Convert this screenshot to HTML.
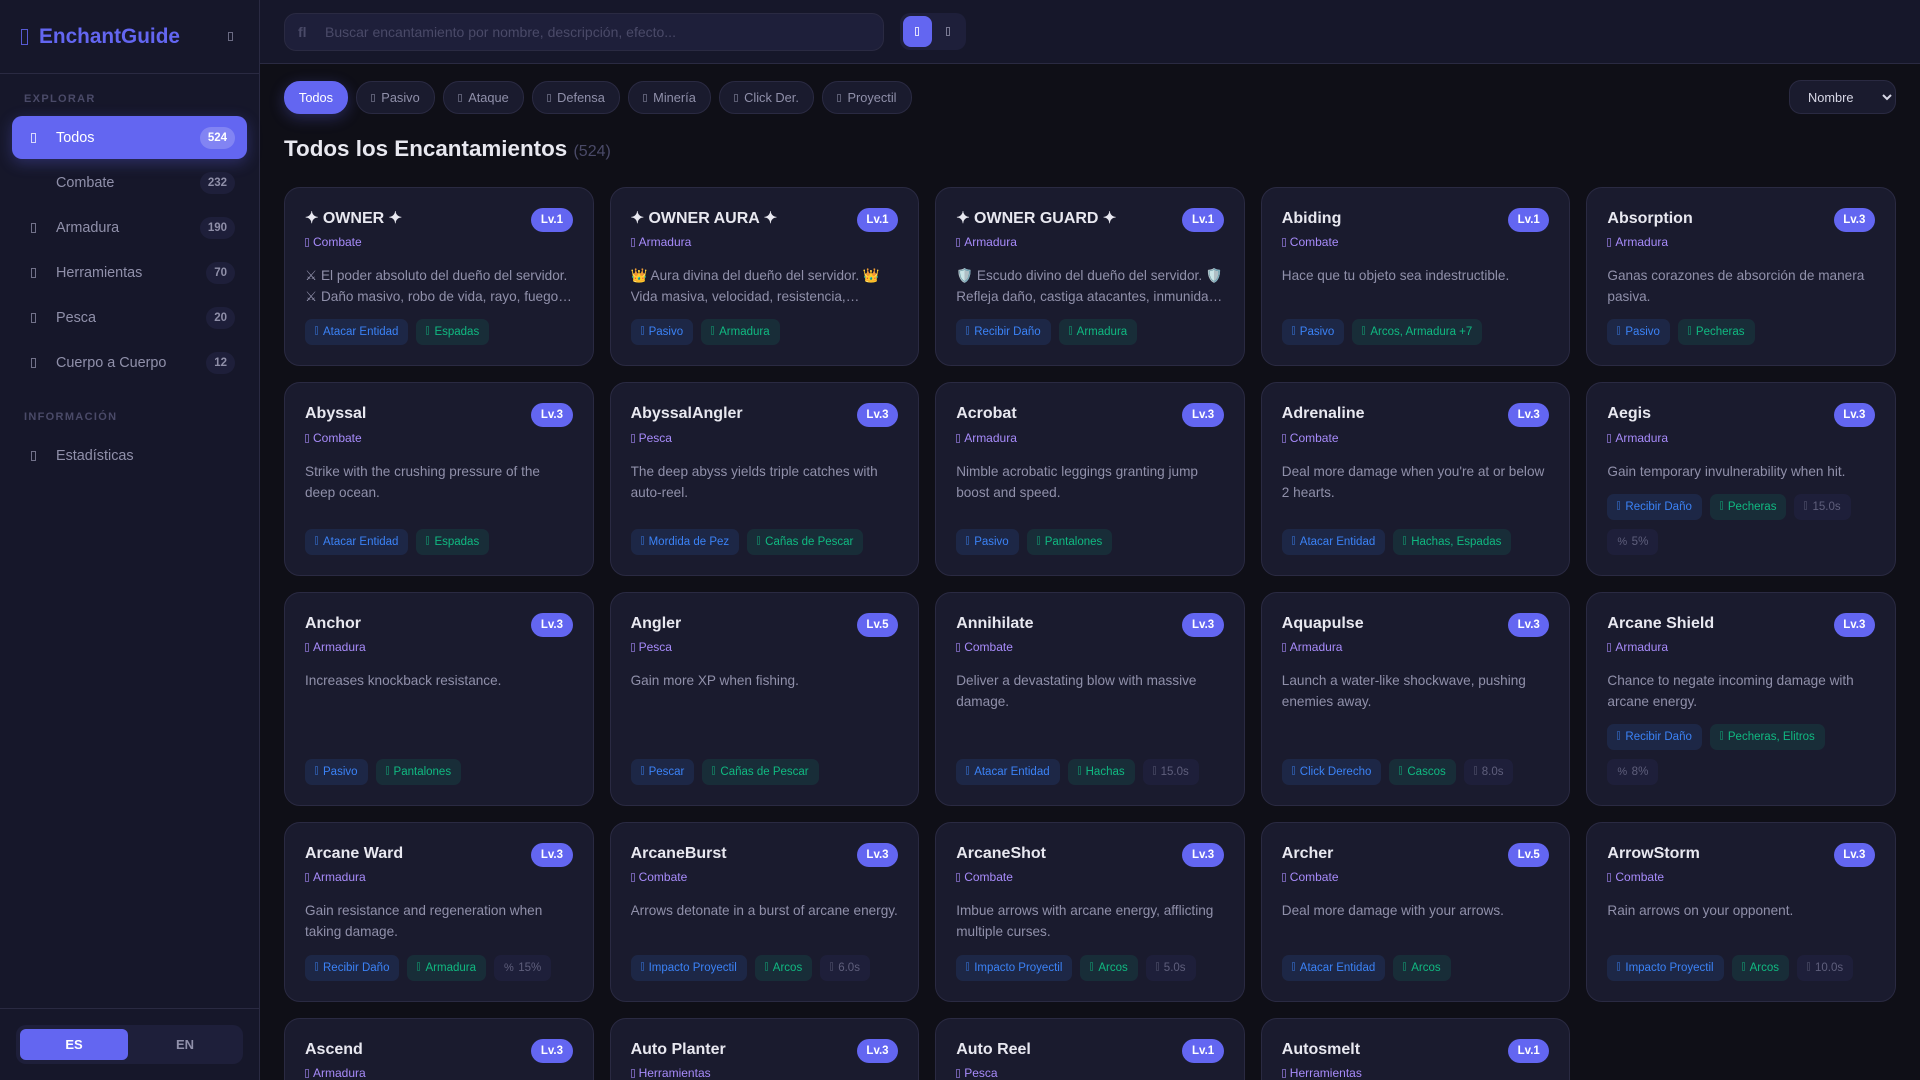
<!DOCTYPE html>
<html lang="es"><head><meta charset="utf-8"><title>EnchantGuide</title>
<style>
*{box-sizing:border-box;margin:0;padding:0}
html,body{width:1920px;height:1080px;overflow:hidden;background:#0f0f17;font-family:"Liberation Sans",sans-serif;color:#e8e8f0}
#r{position:absolute;left:0;top:0;width:1920px;height:1080px;overflow:hidden;background:#0f0f17}
i{font-style:normal}
.side{position:absolute;left:0;top:0;width:260px;height:1080px;background:#16172a;border-right:1px solid #2a2a42}
.hd{height:74px;border-bottom:1px solid #2a2a42;position:relative}
.logo{position:absolute;left:39px;top:21px;font-size:20.8px;font-weight:700;color:#6366f1;line-height:31px;white-space:nowrap}
.li{position:absolute;left:21px;top:29px;width:7px;height:16px;border:1px solid #6366f1;opacity:.85}
.tg{position:absolute;left:228px;top:32px;width:5px;height:9px;border:1px solid #8f8fa8;opacity:.7}
.lab{position:absolute;left:24px;font-size:11px;font-weight:700;letter-spacing:1.32px;color:#4a4a68;line-height:13px}
.n{position:absolute;left:12px;width:235px;height:43px;border-radius:10px;color:#9090aa;font-size:14.4px;line-height:43px;padding:1px 0 0 44px}
.n i{position:absolute;left:19px;top:17px;width:5px;height:10px;border:1px solid currentColor;opacity:.75}
.n b{position:absolute;right:12px;top:11px;height:22px;line-height:22px;padding:0 8px;border-radius:11px;background:#1e1f3a;font-size:11.5px;color:#8f8fa8}
.n.a{background:#6366f1;color:#fff;box-shadow:0 4px 15px rgba(99,102,241,.3)}
.n.a b{background:rgba(255,255,255,.2);color:#fff}
.foot{position:absolute;left:0;right:0;top:1008px;height:72px;border-top:1px solid #2a2a42}
.lang{position:absolute;left:16px;top:16px;width:227px;height:39px;background:#1e1f3a;border-radius:10px}
.lang span{position:absolute;top:4px;height:31px;line-height:31px;text-align:center;font-size:13px;font-weight:700;border-radius:6px;width:108px;color:#9090aa}
.top{position:absolute;left:260px;top:0;width:1660px;height:64px;background:#16172a;border-bottom:1px solid #2a2a42}
.srch{position:absolute;left:24px;top:13px;width:600px;height:38px;background:#1e1f3a;border:1px solid #2a2a42;border-radius:12px;line-height:36px;font-size:14px;color:#4a4a68;padding-left:40px}
.srch i{position:absolute;left:13px;top:0;font-weight:700;font-size:14px}
.vw{position:absolute;left:640px;top:13px;width:66px;height:37px;background:#1e1f3a;border-radius:10px}
.vw span{position:absolute;top:3px;width:29px;height:31px;border-radius:8px}
.vw i{position:absolute;left:12px;top:11px;width:4px;height:9px;border:1px solid #9090aa;opacity:.8}
.fl{position:absolute;top:81px;height:33px;line-height:31px;border-radius:16px;background:#1a1b2e;border:1px solid #2a2a42;color:#9090aa;font-size:12.8px;text-align:center;white-space:nowrap}
.fl i{display:inline-block;width:4px;height:8px;border:1px solid currentColor;opacity:.55;margin-right:6px;vertical-align:0}
.fl.a{background:#6366f1;border-color:#6366f1;color:#fff;box-shadow:0 4px 15px rgba(99,102,241,.3)}
select{position:absolute;left:1789px;top:80px;width:107px;height:34px;background:#1a1b2e;border:1px solid #2a2a42;border-radius:12px;color:#d8d8e6;font:12.8px "Liberation Sans",sans-serif;padding:0 14px}
h1{position:absolute;left:284px;top:135px;font-size:22.4px;font-weight:700;line-height:28px;white-space:nowrap}
h1 span{font-size:16px;font-weight:400;color:#4a4a68}
.grid{position:absolute;left:284px;top:187px;width:1612px;display:grid;grid-template-columns:repeat(5,1fr);grid-template-rows:179px 194px 214px 180px 120px;gap:16px}
.c{background:#1a1b2e;border:1px solid #2a2a42;border-radius:16px;padding:20px;display:flex;flex-direction:column;position:relative;min-width:0}
.t{font-size:16px;font-weight:700;line-height:20px;color:#e8e8f0;height:20px;margin-top:1px}
.lv{position:absolute;right:20px;top:20px;height:24px;line-height:24px;padding:0 9.6px;border-radius:12px;background:#6366f1;color:#fff;font-size:11.5px;font-weight:700}
.ct{font-size:12px;color:#a78bfa;line-height:14px;margin-top:6px;height:14px;white-space:nowrap}
.ct i{display:inline-block;width:4px;height:9px;border:1px solid currentColor;opacity:.6;margin-right:4px;vertical-align:-1px}
.d{font-size:13.6px;line-height:20.8px;color:#9090aa;margin-top:17px;margin-bottom:10px;display:-webkit-box;-webkit-line-clamp:2;-webkit-box-orient:vertical;overflow:hidden}
.c:nth-child(n+6):nth-child(-n+10) .ct{margin-top:7px}
.m{min-height:41.6px}
.tags{display:flex;flex-wrap:wrap;gap:8.6px 8px;margin-top:auto}
.g{height:26.4px;line-height:27px;border-radius:7px;padding:0 10px;font-size:11.5px;white-space:nowrap}
.g i{display:inline-block;width:3px;height:9px;border:1px solid currentColor;opacity:.45;margin-right:5px;vertical-align:0}
.g i.p{width:auto;height:auto;border:0;font-size:11px;margin-right:4.5px;opacity:1;vertical-align:0}
.x{background:rgba(59,130,246,.12);color:#3b82f6}
.y{background:rgba(16,185,129,.12);color:#10b981}
.z{background:#1e1f3a;color:#5f5f7c}
.cut{overflow:hidden}
</style></head><body><div id="r">
<div class="side">
<div class="hd"><span class="li"></span><div class="logo">EnchantGuide</div><span class="tg"></span></div>
<div class="lab" style="top:93px">EXPLORAR</div>
<div class="n a" style="top:116px"><i></i>Todos<b>524</b></div>
<div class="n" style="top:161px">Combate<b>232</b></div>
<div class="n" style="top:206px"><i></i>Armadura<b>190</b></div>
<div class="n" style="top:251px"><i></i>Herramientas<b>70</b></div>
<div class="n" style="top:296px"><i></i>Pesca<b>20</b></div>
<div class="n" style="top:341px"><i></i>Cuerpo a Cuerpo<b>12</b></div>
<div class="lab" style="top:411px">INFORMACIÓN</div>
<div class="n" style="top:434px"><i></i>Estadísticas</div>
<div class="foot"><div class="lang"><span style="left:4px;background:#6366f1;color:#fff">ES</span><span style="left:115px">EN</span></div></div>
</div>
<div class="top">
<div class="srch"><i>fl</i>Buscar encantamiento por nombre, descripción, efecto...</div>
<div class="vw"><span style="left:3px;background:#6366f1"><i style="border-color:#fff"></i></span><span style="left:34px"><i></i></span></div>
</div>
<div class="fl a" style="left:284px;width:64px">Todos</div>
<div class="fl" style="left:356px;width:79px"><i></i>Pasivo</div>
<div class="fl" style="left:443px;width:81px"><i></i>Ataque</div>
<div class="fl" style="left:532px;width:88px"><i></i>Defensa</div>
<div class="fl" style="left:628px;width:83px"><i></i>Minería</div>
<div class="fl" style="left:719px;width:95px"><i></i>Click Der.</div>
<div class="fl" style="left:822px;width:90px"><i></i>Proyectil</div>
<select><option>Nombre</option></select>
<h1>Todos los Encantamientos <span>(524)</span></h1>
<div class="grid">
<div class="c"><div class="t">✦ OWNER ✦</div><span class="lv">Lv.1</span><div class="ct"><i></i>Combate</div><div class="d m">⚔ El poder absoluto del dueño del servidor. ⚔ Daño masivo, robo de vida, rayo, fuego, explosiones y mucho más para ti.</div><div class="tags"><span class="g x"><i></i>Atacar Entidad</span><span class="g y"><i></i>Espadas</span></div></div>
<div class="c"><div class="t">✦ OWNER AURA ✦</div><span class="lv">Lv.1</span><div class="ct"><i></i>Armadura</div><div class="d m">👑 Aura divina del dueño del servidor. 👑 Vida masiva, velocidad, resistencia, regeneración y mucho más para ti.</div><div class="tags"><span class="g x"><i></i>Pasivo</span><span class="g y"><i></i>Armadura</span></div></div>
<div class="c"><div class="t">✦ OWNER GUARD ✦</div><span class="lv">Lv.1</span><div class="ct"><i></i>Armadura</div><div class="d m">🛡️ Escudo divino del dueño del servidor. 🛡️ Refleja daño, castiga atacantes, inmunidad total y mucho más para ti.</div><div class="tags"><span class="g x"><i></i>Recibir Daño</span><span class="g y"><i></i>Armadura</span></div></div>
<div class="c"><div class="t">Abiding</div><span class="lv">Lv.1</span><div class="ct"><i></i>Combate</div><div class="d m">Hace que tu objeto sea indestructible.</div><div class="tags"><span class="g x"><i></i>Pasivo</span><span class="g y"><i></i>Arcos, Armadura +7</span></div></div>
<div class="c"><div class="t">Absorption</div><span class="lv">Lv.3</span><div class="ct"><i></i>Armadura</div><div class="d m">Ganas corazones de absorción de manera pasiva.</div><div class="tags"><span class="g x"><i></i>Pasivo</span><span class="g y"><i></i>Pecheras</span></div></div>

<div class="c"><div class="t">Abyssal</div><span class="lv">Lv.3</span><div class="ct"><i></i>Combate</div><div class="d">Strike with the crushing pressure of the deep ocean.</div><div class="tags"><span class="g x"><i></i>Atacar Entidad</span><span class="g y"><i></i>Espadas</span></div></div>
<div class="c"><div class="t">AbyssalAngler</div><span class="lv">Lv.3</span><div class="ct"><i></i>Pesca</div><div class="d">The deep abyss yields triple catches with auto-reel.</div><div class="tags"><span class="g x"><i></i>Mordida de Pez</span><span class="g y"><i></i>Cañas de Pescar</span></div></div>
<div class="c"><div class="t">Acrobat</div><span class="lv">Lv.3</span><div class="ct"><i></i>Armadura</div><div class="d">Nimble acrobatic leggings granting jump boost and speed.</div><div class="tags"><span class="g x"><i></i>Pasivo</span><span class="g y"><i></i>Pantalones</span></div></div>
<div class="c"><div class="t">Adrenaline</div><span class="lv">Lv.3</span><div class="ct"><i></i>Combate</div><div class="d">Deal more damage when you're at or below 2 hearts.</div><div class="tags"><span class="g x"><i></i>Atacar Entidad</span><span class="g y"><i></i>Hachas, Espadas</span></div></div>
<div class="c"><div class="t">Aegis</div><span class="lv">Lv.3</span><div class="ct"><i></i>Armadura</div><div class="d">Gain temporary invulnerability when hit.</div><div class="tags"><span class="g x"><i></i>Recibir Daño</span><span class="g y"><i></i>Pecheras</span><span class="g z"><i></i>15.0s</span><span class="g z"><i class="p">%</i>5%</span></div></div>

<div class="c"><div class="t">Anchor</div><span class="lv">Lv.3</span><div class="ct"><i></i>Armadura</div><div class="d">Increases knockback resistance.</div><div class="tags"><span class="g x"><i></i>Pasivo</span><span class="g y"><i></i>Pantalones</span></div></div>
<div class="c"><div class="t">Angler</div><span class="lv">Lv.5</span><div class="ct"><i></i>Pesca</div><div class="d">Gain more XP when fishing.</div><div class="tags"><span class="g x"><i></i>Pescar</span><span class="g y"><i></i>Cañas de Pescar</span></div></div>
<div class="c"><div class="t">Annihilate</div><span class="lv">Lv.3</span><div class="ct"><i></i>Combate</div><div class="d">Deliver a devastating blow with massive damage.</div><div class="tags"><span class="g x"><i></i>Atacar Entidad</span><span class="g y"><i></i>Hachas</span><span class="g z"><i></i>15.0s</span></div></div>
<div class="c"><div class="t">Aquapulse</div><span class="lv">Lv.3</span><div class="ct"><i></i>Armadura</div><div class="d">Launch a water-like shockwave, pushing enemies away.</div><div class="tags"><span class="g x"><i></i>Click Derecho</span><span class="g y"><i></i>Cascos</span><span class="g z"><i></i>8.0s</span></div></div>
<div class="c"><div class="t">Arcane Shield</div><span class="lv">Lv.3</span><div class="ct"><i></i>Armadura</div><div class="d">Chance to negate incoming damage with arcane energy.</div><div class="tags"><span class="g x"><i></i>Recibir Daño</span><span class="g y"><i></i>Pecheras, Elitros</span><span class="g z"><i class="p">%</i>8%</span></div></div>

<div class="c"><div class="t">Arcane Ward</div><span class="lv">Lv.3</span><div class="ct"><i></i>Armadura</div><div class="d">Gain resistance and regeneration when taking damage.</div><div class="tags"><span class="g x"><i></i>Recibir Daño</span><span class="g y"><i></i>Armadura</span><span class="g z"><i class="p">%</i>15%</span></div></div>
<div class="c"><div class="t">ArcaneBurst</div><span class="lv">Lv.3</span><div class="ct"><i></i>Combate</div><div class="d m">Arrows detonate in a burst of arcane energy.</div><div class="tags"><span class="g x"><i></i>Impacto Proyectil</span><span class="g y"><i></i>Arcos</span><span class="g z"><i></i>6.0s</span></div></div>
<div class="c"><div class="t">ArcaneShot</div><span class="lv">Lv.3</span><div class="ct"><i></i>Combate</div><div class="d">Imbue arrows with arcane energy, afflicting multiple curses.</div><div class="tags"><span class="g x"><i></i>Impacto Proyectil</span><span class="g y"><i></i>Arcos</span><span class="g z"><i></i>5.0s</span></div></div>
<div class="c"><div class="t">Archer</div><span class="lv">Lv.5</span><div class="ct"><i></i>Combate</div><div class="d m">Deal more damage with your arrows.</div><div class="tags"><span class="g x"><i></i>Atacar Entidad</span><span class="g y"><i></i>Arcos</span></div></div>
<div class="c"><div class="t">ArrowStorm</div><span class="lv">Lv.3</span><div class="ct"><i></i>Combate</div><div class="d m">Rain arrows on your opponent.</div><div class="tags"><span class="g x"><i></i>Impacto Proyectil</span><span class="g y"><i></i>Arcos</span><span class="g z"><i></i>10.0s</span></div></div>

<div class="c cut"><div class="t">Ascend</div><span class="lv">Lv.3</span><div class="ct"><i></i>Armadura</div></div>
<div class="c cut"><div class="t">Auto Planter</div><span class="lv">Lv.3</span><div class="ct"><i></i>Herramientas</div></div>
<div class="c cut"><div class="t">Auto Reel</div><span class="lv">Lv.1</span><div class="ct"><i></i>Pesca</div></div>
<div class="c cut"><div class="t">Autosmelt</div><span class="lv">Lv.1</span><div class="ct"><i></i>Herramientas</div></div>
</div>
</div></body></html>
